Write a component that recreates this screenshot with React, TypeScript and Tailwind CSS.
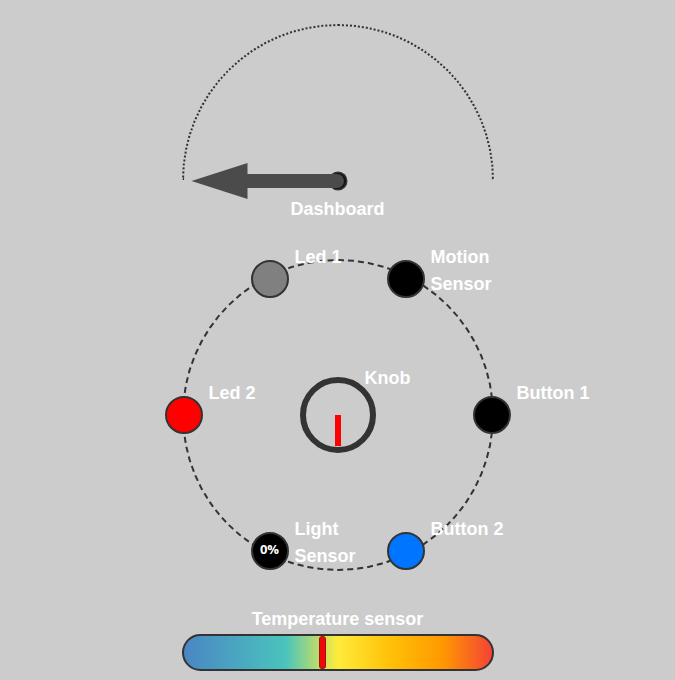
import { useState } from "react";

type NodeProps = {
  label: string;
  place: string;
  fill: string;
  value?: string;
  pressable?: boolean;
};

const nodes: NodeProps[] = [
  { label: "Led 1", place: "left-[67px] -top-px", fill: "bg-[#808080]" },
  { label: "Motion Sensor", place: "left-[203px] -top-px", fill: "bg-black" },
  { label: "Led 2", place: "-left-[19px] top-[135px]", fill: "bg-[#ff0000]" },
  { label: "Button 1", place: "left-[289px] top-[135px]", fill: "bg-black", pressable: true },
  { label: "Light Sensor", place: "left-[67px] top-[271px]", fill: "bg-black", value: "0%" },
  { label: "Button 2", place: "left-[203px] top-[271px]", fill: "bg-[#0075ff]", pressable: true },
];

function Device({ label, place, fill, value, pressable }: NodeProps) {
  const id = label.toLowerCase().replace(" ", "-");
  const dot = `flex size-[38px] items-center justify-center rounded-full border-2 border-[#333] pb-1 font-['Open_Sans',sans-serif] text-[13px] font-bold ${fill}`;
  return (
    <div className={`absolute ${place}`}>
      {pressable ? (
        <button type="button" aria-labelledby={id} className={dot} />
      ) : (
        <div aria-labelledby={id} className={dot}>{value}</div>
      )}
      <span id={id} className={`absolute -top-4 left-11 ${label.includes("Sensor") ? "w-16" : "whitespace-nowrap"}`}>
        {label}
      </span>
    </div>
  );
}

function Gauge() {
  return (
    <section className="flex flex-col items-center gap-4">
      <div className="relative h-[156px] w-[312px] rounded-t-full border-2 border-b-0 border-dotted border-[#333]">
        <svg viewBox="0 0 170 40" className="absolute left-0 top-[135px] h-10 w-[170px]" aria-hidden="true">
          <circle cx="154" cy="20" r="9.5" fill="#333" />
          <circle cx="154" cy="20" r="8" fill="#151515" />
          <path d="M7.500 20L63.500 2V13H153A7 7 0 0 1 153 27H63.500V38Z" fill="#4b4b4b" />
        </svg>
      </div>
      <h2>Dashboard</h2>
    </section>
  );
}

function Knob() {
  const [value, setValue] = useState(0);
  return (
    <div className="relative size-[76px]">
      <input
        id="knob"
        type="range"
        min={0}
        max={360}
        value={value}
        onChange={(e) => setValue(Number(e.target.value))}
        className="block size-[76px] cursor-pointer appearance-none rounded-full border-6 border-[#333] bg-transparent [&::-webkit-slider-thumb]:opacity-0"
      />
      <div
        className="pointer-events-none absolute left-[35px] top-[38px] h-[31px] w-[6px] origin-top bg-[#ff0000]"
        style={{ transform: `rotate(${value}deg)` }}
      />
      <label htmlFor="knob" className="absolute -top-3 left-[65px]">Knob</label>
    </div>
  );
}

function Thermometer() {
  return (
    <section className="flex flex-col items-center gap-px">
      <h2 id="temperature">Temperature sensor</h2>
      <div
        role="meter"
        aria-labelledby="temperature"
        aria-valuemin={0}
        aria-valuemax={100}
        aria-valuenow={45}
        className="relative h-[37px] w-[312px] rounded-full border-2 border-[#333] bg-[linear-gradient(to_right,#4a86c5_0%,#4ac4bc_33%,#ffeb3b_50%,#ffc107_67%,#ff9800_84%,#f44336_100%)]"
      >
        <div className="absolute left-[135px] top-0 h-[33px] w-[7px] rounded-[3px] border border-[#a01010] bg-[#ee0808]" />
      </div>
    </section>
  );
}

export default function App() {
  return (
    <main className="flex min-h-screen flex-col items-center bg-[#ccc] pt-6 font-['Liberation_Sans',Arial,sans-serif] text-lg/[27px] font-bold text-white">
      <Gauge />
      <section className="relative mt-9 flex size-[312px] items-center justify-center rounded-full border-2 border-dashed border-[#333]">
        {nodes.map((node) => (
          <Device key={node.label} {...node} />
        ))}
        <Knob />
      </section>
      <div className="mt-[35px]">
        <Thermometer />
      </div>
    </main>
  );
}
